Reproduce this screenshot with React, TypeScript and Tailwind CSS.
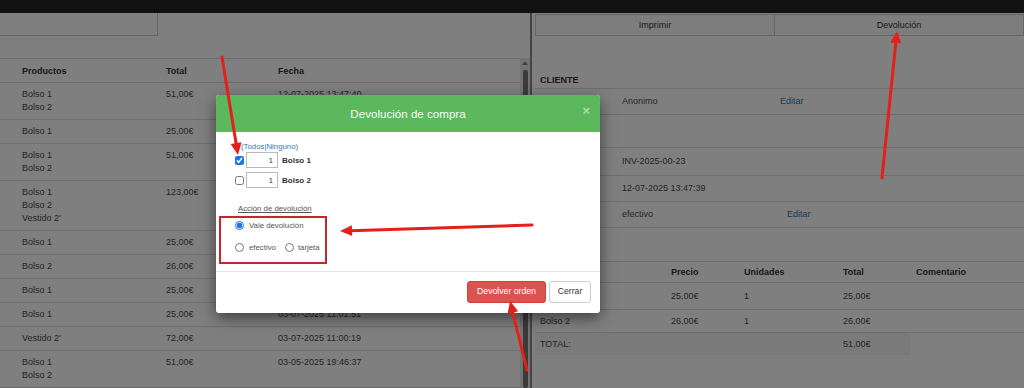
import { ReactNode } from "react";

type Row = { p: string[]; t: string; f: string };

const ventas: Row[] = [
  { p: ["Bolso 1", "Bolso 2"], t: "51,00€", f: "12-07-2025 13:47:40" },
  { p: ["Bolso 1"], t: "25,00€", f: "12-07-2025 13:20:05" },
  { p: ["Bolso 1", "Bolso 2"], t: "51,00€", f: "11-07-2025 18:02:44" },
  { p: ["Bolso 1", "Bolso 2", "Vestido 2'"], t: "123,00€", f: "10-07-2025 12:31:09" },
  { p: ["Bolso 1"], t: "25,00€", f: "08-07-2025 17:15:22" },
  { p: ["Bolso 2"], t: "26,00€", f: "07-07-2025 10:42:57" },
  { p: ["Bolso 1"], t: "25,00€", f: "05-07-2025 16:08:31" },
  { p: ["Bolso 1"], t: "25,00€", f: "03-07-2025 11:01:51" },
  { p: ["Vestido 2'"], t: "72,00€", f: "03-07-2025 11:00:19" },
  { p: ["Bolso 1", "Bolso 2"], t: "51,00€", f: "03-05-2025 19:46:37" },
];

function LeftPanel() {
  return (
    <div className="flex h-full w-[532px] flex-col border-r-2 border-[#888]">
      <div className="h-[45px]">
        <div className="h-[23px] w-[158px] border-b border-r border-[#ccc]" />
      </div>
      <div className="flex min-h-0 flex-1">
        <div className="flex-1 text-[9px] leading-[13px] text-[#4a4a4a]">
          <div className="flex h-[25px] items-center border-y border-[#ddd] pt-px font-bold text-[#333]">
            <div className="w-[166px] pl-[22px]">Productos</div>
            <div className="w-[112px]">Total</div>
            <div className="flex-1">Fecha</div>
          </div>
          {ventas.map((r, i) => (
            <div key={i} className="flex border-b border-[#ddd] py-[5px]">
              <div className="w-[166px] pl-[22px]">
                {r.p.map((x) => (
                  <div key={x}>{x}</div>
                ))}
              </div>
              <div className="w-[112px]">{r.t}</div>
              <div className="flex-1">{r.f}</div>
            </div>
          ))}
        </div>
        <div className="flex w-[10px] flex-col items-center bg-[#e6e6e6]">
          <div className="mt-[3px] h-0 w-0 border-x-[3px] border-b-[4px] border-x-transparent border-b-[#888]" />
          <div className="mt-[5px] w-[5px] flex-1 rounded-[2px] bg-[#777]" />
        </div>
      </div>
    </div>
  );
}

function Cell({ w, children, className = "" }: { w: string; children?: ReactNode; className?: string }) {
  return <div className={`${w} shrink-0 pl-[5px] ${className}`}>{children}</div>;
}

function RightPanel() {
  const link = "text-[#337ab7]";
  return (
    <div className="flex h-full flex-1 flex-col text-[9px] leading-[13px] text-[#4a4a4a]">
      <div className="ml-[3px] mt-px flex h-[22px] text-[#333]">
        <div className="flex w-[240px] items-center justify-center border border-[#ccc] bg-[#fafafa]">Imprimir</div>
        <div className="flex flex-1 items-center justify-center border border-l-0 border-[#ccc] bg-[#fafafa]">Devolución</div>
      </div>
      <div className="ml-[3px]">
        <div className="flex h-[53px] items-end border-b border-[#ddd] pb-px pl-[5px] font-bold text-[#333]">CLIENTE</div>
        <div className="flex h-[26px] items-center border-b border-[#ddd]">
          <Cell w="w-[82px]">Cliente</Cell>
          <Cell w="w-[158px]">Anonimo</Cell>
          <Cell w="w-auto" className={link}>Editar</Cell>
        </div>
        <div className="flex h-[33px] items-center border-b border-[#ddd]">
          <Cell w="w-[82px]">NIF</Cell>
        </div>
        <div className="flex h-[28px] items-center border-b border-[#ddd]">
          <Cell w="w-[82px]">Factura</Cell>
          <Cell w="w-[158px]">INV-2025-00-23</Cell>
        </div>
        <div className="flex h-[26px] items-center border-b border-[#ddd]">
          <Cell w="w-[82px]">Fecha</Cell>
          <Cell w="w-[158px]">12-07-2025 13:47:39</Cell>
        </div>
        <div className="flex h-[26px] items-center border-b border-[#ddd]">
          <Cell w="w-[82px]">Pago</Cell>
          <Cell w="w-[165px]">efectivo</Cell>
          <Cell w="w-auto" className={link}>Editar</Cell>
        </div>

        <div className="mt-[33px] flex h-[22px] items-center border-y border-[#ddd] font-bold text-[#333]">
          <Cell w="w-[131px]">Producto</Cell>
          <Cell w="w-[73px]">Precio</Cell>
          <Cell w="w-[99px]">Unidades</Cell>
          <Cell w="w-[73px]">Total</Cell>
          <Cell w="w-auto">Comentario</Cell>
        </div>
        <div className="flex h-[27px] items-center border-b border-[#ddd]">
          <Cell w="w-[131px]">Bolso 1</Cell>
          <Cell w="w-[73px]">25,00€</Cell>
          <Cell w="w-[99px]">1</Cell>
          <Cell w="w-[73px]">25,00€</Cell>
        </div>
        <div className="flex h-[23px] items-center border-b border-[#ddd]">
          <Cell w="w-[131px]">Bolso 2</Cell>
          <Cell w="w-[73px]">26,00€</Cell>
          <Cell w="w-[99px]">1</Cell>
          <Cell w="w-[73px]">26,00€</Cell>
        </div>
        <div className="flex h-[22px]">
          <div className="flex w-[376px] items-center bg-[#f4f4f4]">
            <Cell w="w-[303px]">TOTAL:</Cell>
            <Cell w="w-[73px]">51,00€</Cell>
          </div>
        </div>
      </div>
    </div>
  );
}

function Modal() {
  return (
    <div className="absolute left-[216px] top-[95px] flex h-[218px] w-[384px] flex-col overflow-hidden rounded-[3px] bg-white shadow-[0_5px_15px_rgba(0,0,0,0.5)]">
      <div className="relative flex h-[37px] shrink-0 items-center justify-center bg-[#5cb85c]">
        <span className="text-[11.6px] text-[#f4fbf4]">Devolución de compra</span>
        <span className="absolute right-[10px] top-[9px] text-[13px] font-bold leading-[14px] text-white/50">×</span>
      </div>
      <div className="flex-1 pl-[19px] pt-[10px] text-[7.8px] leading-[9px] text-[#555]">
        <div className="ml-[6px] text-[#337ab7]">(Todos|Ninguno)</div>
        {["Bolso 1", "Bolso 2"].map((b, i) => (
          <div key={b} className={`flex h-[16px] items-center ${i === 0 ? "mt-[1px]" : "mt-[4px]"}`}>
            <input type="checkbox" defaultChecked={i === 0} className="m-0 h-[9px] w-[9px] accent-[#1a73e8]" />
            <input
              type="text"
              defaultValue="1"
              className="ml-[2px] h-[16px] w-[32px] border border-[#bbb] pr-[4px] text-right text-[7.5px] text-[#333] outline-none"
            />
            <span className="ml-[4px] text-[8px] font-bold text-[#333]">{b}</span>
          </div>
        ))}
        <div className="ml-[3px] mt-[16px] underline">Acción de devolución</div>
        <div className="mt-[8px] flex items-center">
          <input type="radio" name="accion" defaultChecked className="m-0 h-[9px] w-[9px] accent-[#1a73e8]" />
          <span className="ml-[5px]">Vale devolución</span>
        </div>
        <div className="mt-[13px] flex items-center">
          <input type="radio" name="accion" className="m-0 h-[9px] w-[9px]" />
          <span className="ml-[5px]">efectivo</span>
          <input type="radio" name="accion" className="m-0 ml-[9px] h-[9px] w-[9px]" />
          <span className="ml-[4px]">tarjeta</span>
        </div>
      </div>
      <div className="flex h-[42px] shrink-0 items-start justify-end gap-[3px] border-t border-[#e5e5e5] pr-[9px] pt-[9px] text-[8.7px]">
        <div className="flex h-[22px] w-[79px] items-center justify-center rounded-[3px] border border-[#d43f3a] bg-[#d9534f] text-white">
          Devolver orden
        </div>
        <div className="flex h-[22px] w-[42px] items-center justify-center rounded-[3px] border border-[#ccc] bg-white text-[#333]">
          Cerrar
        </div>
      </div>
    </div>
  );
}

function Arrow({ x1, y1, x2, y2 }: { x1: number; y1: number; x2: number; y2: number }) {
  const dx = x2 - x1;
  const dy = y2 - y1;
  const len = Math.hypot(dx, dy);
  const ux = dx / len;
  const uy = dy / len;
  const hl = 12;
  const hw = 5.5;
  const bx = x2 - ux * hl;
  const by = y2 - uy * hl;
  const pts = `${x2},${y2} ${bx - uy * hw},${by + ux * hw} ${bx + uy * hw},${by - ux * hw}`;
  return (
    <g>
      <line x1={x1} y1={y1} x2={bx + ux * 2} y2={by + uy * 2} stroke="#e3201b" strokeWidth={3} strokeLinecap="round" />
      <polygon points={pts} fill="#e3201b" />
    </g>
  );
}

function Annotations() {
  return (
    <svg className="pointer-events-none absolute left-0 top-0" width={1024} height={388}>
      <rect x={220} y={217} width={106} height={46} fill="none" stroke="#c62828" strokeWidth={2} />
      <Arrow x1={222} y1={57} x2={238} y2={155} />
      <Arrow x1={882} y1={178} x2={897} y2={31} />
      <Arrow x1={532} y1={225} x2={340} y2={231} />
      <Arrow x1={527} y1={370} x2={510} y2={301} />
    </svg>
  );
}

export default function App() {
  return (
    <div className="relative h-[388px] w-[1024px] overflow-hidden bg-white font-['Liberation_Sans',Arial,sans-serif]">
      <div className="h-[13px] bg-[#111]" />
      <div className="relative flex h-[375px]">
        <LeftPanel />
        <RightPanel />
        <div className="absolute inset-0 bg-black/50" />
      </div>
      <Modal />
      <Annotations />
    </div>
  );
}
